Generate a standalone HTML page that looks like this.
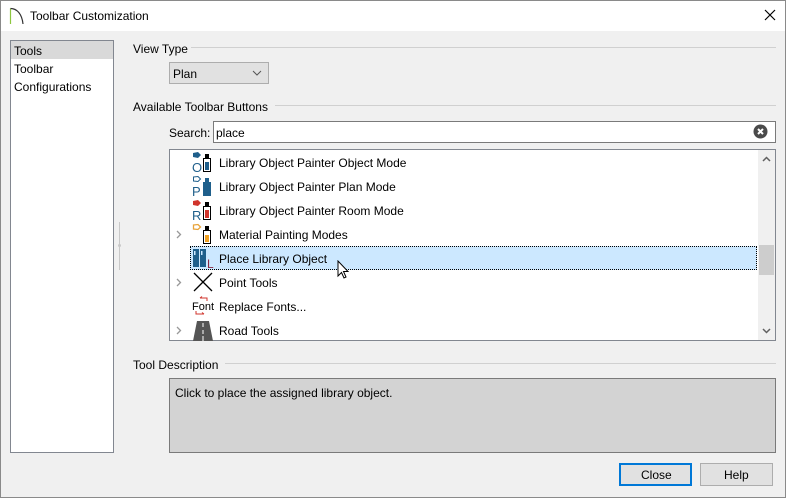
<!DOCTYPE html>
<html><head><meta charset="utf-8"><style>
*{margin:0;padding:0;box-sizing:border-box}
body{width:786px;height:498px;background:#f0f0f0;font-family:"Liberation Sans",sans-serif;font-size:12px;color:#000;position:relative;overflow:hidden}
.a{position:absolute}
.win{left:0;top:0;width:786px;height:498px;border:1px solid #8a8a8a}
.title{left:1px;top:1px;width:784px;height:30px;background:#fff}
.lbl{white-space:nowrap}
.line{height:1px;background:#d0d0d0}
.row{left:170px;width:587px;height:24px}
.row .t{position:absolute;left:49px;top:6px}
.row svg.i{position:absolute;left:22px;top:1px}
.chev{position:absolute;left:6px;top:8px}
</style></head><body>
<div class="a win"></div>
<div class="a title"></div>
<svg class="a" style="left:9px;top:7px" width="16" height="18"><path d="M1.5 1.5V17" stroke="#8dc63f" stroke-width="1.2" fill="none"/><path d="M1.5 1.5C8 1.5 13 7 14 17" stroke="#333" stroke-width="1.2" fill="none"/></svg>
<div class="a lbl" style="left:30px;top:9px">Toolbar Customization</div>
<svg class="a" style="left:764px;top:9px" width="12" height="12"><path d="M1 1L11 11M11 1L1 11" stroke="#000" stroke-width="1.2"/></svg>

<div class="a" style="left:10px;top:40px;width:104px;height:413px;background:#fff;border:1px solid #828790"></div>
<div class="a" style="left:11px;top:41px;width:102px;height:18px;background:#d9d9d9"></div>
<div class="a lbl" style="left:14px;top:44px">Tools</div>
<div class="a lbl" style="left:14px;top:62px">Toolbar</div>
<div class="a lbl" style="left:14px;top:80px">Configurations</div>
<div class="a" style="left:119px;top:222px;width:1px;height:48px;background:#c8c8c8"></div>
<div class="a" style="left:118px;top:244px;width:3px;height:3px;background:#c8c8c8;border-radius:2px"></div>

<div class="a lbl" style="left:133px;top:42px">View Type</div>
<div class="a line" style="left:191px;top:47px;width:585px"></div>
<div class="a" style="left:169px;top:62px;width:100px;height:22px;background:#e1e1e1;border:1px solid #adadad"></div>
<div class="a lbl" style="left:173px;top:67px">Plan</div>
<svg class="a" style="left:252px;top:70px" width="10" height="6"><path d="M1 1L5 5L9 1" stroke="#555" fill="none"/></svg>

<div class="a lbl" style="left:133px;top:100px">Available Toolbar Buttons</div>
<div class="a line" style="left:275px;top:105px;width:501px"></div>
<div class="a lbl" style="left:169px;top:126px">Search:</div>
<div class="a" style="left:213px;top:121px;width:563px;height:22px;background:#fff;border:1px solid #7a7a7a"></div>
<div class="a lbl" style="left:216px;top:126px">place</div>
<svg class="a" style="left:753px;top:124px" width="15" height="15"><circle cx="7.5" cy="7.5" r="7" fill="#4a4a4a"/><path d="M5 5L10 10M10 5L5 10" stroke="#fff" stroke-width="2"/></svg>

<div class="a" style="left:169px;top:149px;width:607px;height:192px;background:#fff;border:1px solid #828790"></div>
<div class="a" style="left:758px;top:150px;width:17px;height:190px;background:#f0f0f0"></div>
<div class="a" style="left:759px;top:245px;width:15px;height:30px;background:#cdcdcd"></div>
<svg class="a" style="left:762px;top:156px" width="9" height="6"><path d="M1 5L4.5 1.5L8 5" stroke="#606060" stroke-width="1.5" fill="none"/></svg>
<svg class="a" style="left:762px;top:328px" width="9" height="6"><path d="M1 1L4.5 4.5L8 1" stroke="#606060" stroke-width="1.5" fill="none"/></svg>

<div class="a" style="left:190px;top:246px;width:567px;height:24px;background:#cce8ff;border:1px dotted #000"></div>

<div class="a row" style="top:150px"><svg class="i" width="22" height="22"><path d="M1 2L6 1L9 4L6 7L1 6Z" fill="#1f5f8b"/><text x="0" y="21" font-size="13" fill="#1f5f8b" font-family="Liberation Sans">O</text><rect x="11.5" y="7.5" width="7" height="13" fill="#fff" stroke="#000"/><rect x="13" y="11" width="4" height="8" fill="#1f5f8b"/><rect x="13" y="3" width="4" height="4" fill="#000"/></svg><span class="t">Library Object Painter Object Mode</span></div>
<div class="a row" style="top:174px"><svg class="i" width="22" height="22"><path d="M1.5 2L6 1.5L8.5 4L6 6.5L1.5 6Z" fill="none" stroke="#1f5f8b"/><text x="0" y="21" font-size="13" fill="#1f5f8b" font-family="Liberation Sans">P</text><rect x="11" y="7" width="8" height="14" fill="#1f5f8b"/><rect x="13" y="3" width="4" height="4" fill="#1f5f8b"/></svg><span class="t">Library Object Painter Plan Mode</span></div>
<div class="a row" style="top:198px"><svg class="i" width="22" height="22"><path d="M1 2L6 1L9 4L6 7L1 6Z" fill="#d0342c"/><text x="0" y="21" font-size="13" fill="#1f5f8b" font-family="Liberation Sans">R</text><rect x="11.5" y="7.5" width="7" height="13" fill="#fff" stroke="#000"/><rect x="13" y="11" width="4" height="8" fill="#d0342c"/><rect x="13" y="3" width="4" height="4" fill="#000"/></svg><span class="t">Library Object Painter Room Mode</span></div>
<div class="a row" style="top:222px"><svg class="chev" width="6" height="9"><path d="M1 1L4.5 4.5L1 8" stroke="#999" stroke-width="1.3" fill="none"/></svg><svg class="i" width="22" height="22"><path d="M1.5 2L6 1.5L8.5 4L6 6.5L1.5 6Z" fill="none" stroke="#e8a33a" stroke-width="1.3"/><rect x="11.5" y="7.5" width="7" height="13" fill="#fff" stroke="#000"/><rect x="13" y="12" width="4" height="7" fill="#f0a020"/><rect x="13" y="3" width="4" height="4" fill="#000"/></svg><span class="t">Material Painting Modes</span></div>
<div class="a row" style="top:246px"><svg class="i" width="24" height="22"><rect x="1" y="2" width="6" height="18" fill="#1f5f8b"/><rect x="8" y="2" width="6" height="18" fill="#1f5f8b"/><rect x="2" y="4" width="1.5" height="4" fill="#cce8ff"/><rect x="9" y="4" width="1.5" height="4" fill="#cce8ff"/><text x="15" y="21" font-size="12" fill="#8b2942" font-family="Liberation Sans">L</text></svg><span class="t">Place Library Object</span></div>
<div class="a row" style="top:270px"><svg class="chev" width="6" height="9"><path d="M1 1L4.5 4.5L1 8" stroke="#999" stroke-width="1.3" fill="none"/></svg><svg class="i" width="22" height="22"><path d="M2 2L20 20M20 2L2 20" stroke="#000" stroke-width="1.3"/></svg><span class="t">Point Tools</span></div>
<div class="a row" style="top:294px"><svg class="i" width="24" height="22"><path d="M8 3H15V6M8 3L10 1.5" stroke="#d0342c" fill="none"/><text x="0" y="15" font-size="11" font-family="Liberation Sans">Font</text><path d="M4 16V19H12M12 19L10 17.5" stroke="#d0342c" fill="none"/></svg><span class="t">Replace Fonts...</span></div>
<div class="a row" style="top:318px"><svg class="chev" width="6" height="9"><path d="M1 1L4.5 4.5L1 8" stroke="#999" stroke-width="1.3" fill="none"/></svg><svg class="i" width="22" height="22"><path d="M5 2H17L21 22H1Z" fill="#555"/><path d="M11 4V8M11 11V15M11 17V22" stroke="#fff"/></svg><span class="t">Road Tools</span></div>

<svg class="a" style="left:337px;top:260px" width="14" height="20"><path d="M1 1V16L4.5 12.5L7 18L9 17L6.5 11.5H11Z" fill="#fff" stroke="#000"/></svg>

<div class="a lbl" style="left:133px;top:358px">Tool Description</div>
<div class="a line" style="left:225px;top:363px;width:551px"></div>
<div class="a" style="left:169px;top:378px;width:607px;height:75px;background:#d3d3d3;border:1px solid #7a7a7a"></div>
<div class="a lbl" style="left:175px;top:386px">Click to place the assigned library object.</div>

<div class="a" style="left:619px;top:463px;width:73px;height:23px;background:#e1e1e1;border:2px solid #0078d7"></div>
<div class="a lbl" style="left:641px;top:468px">Close</div>
<div class="a" style="left:700px;top:463px;width:73px;height:23px;background:#e1e1e1;border:1px solid #adadad"></div>
<div class="a lbl" style="left:724px;top:468px">Help</div>
</body></html>
